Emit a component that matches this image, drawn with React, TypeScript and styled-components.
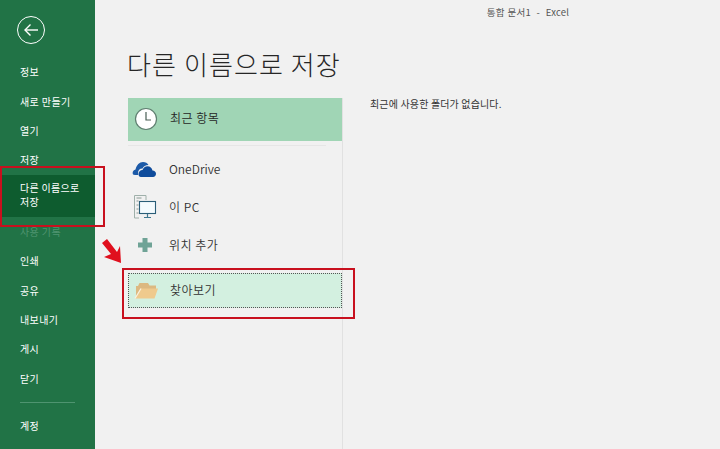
import styled, { createGlobalStyle } from "styled-components";

const GlobalStyle = createGlobalStyle`
  html, body {
    margin: 0;
    padding: 0;
    background: #f1f1f1;
    overflow: hidden;
  }
  * {
    box-sizing: border-box;
  }
`;

const Page = styled.div`
  position: relative;
  width: 720px;
  height: 449px;
  display: flex;
  overflow: hidden;
  background: #f1f1f1;
  font-family: "Noto Sans CJK KR", "Noto Sans", sans-serif;
  color: #333;
`;

const Sidebar = styled.nav`
  width: 95px;
  height: 449px;
  flex: none;
  background: #217346;
  display: flex;
  flex-direction: column;
  padding-top: 16px;
`;

const BackButton = styled.div`
  width: 28px;
  height: 28px;
  margin-left: 17px;
  margin-bottom: 13px;
  border: 1.5px solid #fff;
  border-radius: 50%;
  display: flex;
  align-items: center;
  justify-content: center;
`;

const NavItem = styled.div<{ $muted?: boolean }>`
  height: 29.4px;
  flex: none;
  padding-left: 20px;
  display: flex;
  align-items: center;
  font-size: 10px;
  font-weight: 400;
  letter-spacing: 0.4px;
  color: ${(props) => (props.$muted ? "#4f9470" : "#fff")};
`;

const ActiveItem = styled.div`
  height: 42px;
  flex: none;
  padding: 0 0 1px 20px;
  background: #0e5c2f;
  display: flex;
  flex-direction: column;
  justify-content: center;
  font-size: 10px;
  font-weight: 400;
  line-height: 14px;
  letter-spacing: 0.3px;
  color: #fff;
`;

const NavDivider = styled.div`
  height: 1px;
  flex: none;
  margin: 9px 20px 8px;
  background: #4f9470;
`;

const Main = styled.main`
  flex: 1;
  min-width: 0;
  display: flex;
  flex-direction: column;
`;

const TitleBar = styled.div`
  height: 24px;
  flex: none;
  display: flex;
  justify-content: center;
  align-items: center;
  padding-left: 241px;
  font-size: 9.5px;
  letter-spacing: 0.2px;
  word-spacing: 0.5px;
  color: #555;
  white-space: pre;
`;

const Heading = styled.h1`
  margin: 0;
  height: 74px;
  flex: none;
  padding: 22px 0 0 32px;
  font-size: 26px;
  font-weight: 300;
  line-height: 36px;
  letter-spacing: 1.1px;
  color: #262626;
`;

const Columns = styled.div`
  flex: 1;
  display: flex;
  padding-left: 33px;
`;

const Places = styled.div`
  width: 215px;
  flex: none;
  border-right: 1px solid #e1e1e1;
  display: flex;
  flex-direction: column;
`;

const RowLabel = styled.span<{ $latin?: boolean }>`
  position: relative;
  top: -1px;
  font-weight: 350;
  letter-spacing: ${(props) => (props.$latin ? "0" : "0.5px")};
`;

const RecentRow = styled.div`
  height: 43px;
  flex: none;
  display: flex;
  align-items: center;
  gap: 12px;
  padding: 0 0 2px 5px;
  background: #a0d5b5;
  font-size: 12px;
  color: #262626;
`;

const Separator = styled.div`
  height: 1px;
  flex: none;
  margin: 4px 16px 4px 0;
  background: #e6e6e6;
`;

const PlaceRow = styled.div`
  height: 38px;
  flex: none;
  display: flex;
  align-items: center;
  gap: 12px;
  padding-left: 4px;
  font-size: 12px;
  color: #333;
`;

const IconSlot = styled.span`
  width: 25px;
  height: 25px;
  flex: none;
  display: flex;
  align-items: center;
  justify-content: center;
`;

const BrowseRow = styled.div`
  height: 35px;
  flex: none;
  margin-top: 9px;
  display: flex;
  align-items: center;
  gap: 12px;
  padding-left: 4px;
  background: #d3f0e0;
  border: 1px dotted #555;
  font-size: 12px;
  color: #333;
`;

const Detail = styled.div`
  flex: 1;
  padding: 0 0 0 27px;
  font-size: 10px;
  line-height: 11px;
  letter-spacing: 0.15px;
  color: #333;
`;

const RedBox = styled.div<{ $left: number; $top: number; $width: number; $height: number }>`
  position: absolute;
  left: ${(props) => props.$left}px;
  top: ${(props) => props.$top}px;
  width: ${(props) => props.$width}px;
  height: ${(props) => props.$height}px;
  border: 2px solid #c8101e;
`;

const Arrow = styled.svg`
  position: absolute;
  left: 102px;
  top: 238px;
`;

function App() {
  return (
    <Page>
      <GlobalStyle />
      <Sidebar>
        <BackButton>
          <svg width="16" height="14" viewBox="0 0 16 14" fill="none" stroke="#fff" strokeWidth="1.4">
            <path d="M15 7H2" />
            <path d="M7.5 1.5 2 7l5.5 5.5" />
          </svg>
        </BackButton>
        <NavItem>정보</NavItem>
        <NavItem>새로 만들기</NavItem>
        <NavItem>열기</NavItem>
        <NavItem>저장</NavItem>
        <ActiveItem>
          <span>다른 이름으로</span>
          <span>저장</span>
        </ActiveItem>
        <NavItem $muted>사용 기록</NavItem>
        <NavItem>인쇄</NavItem>
        <NavItem>공유</NavItem>
        <NavItem>내보내기</NavItem>
        <NavItem>게시</NavItem>
        <NavItem>닫기</NavItem>
        <NavDivider />
        <NavItem>계정</NavItem>
      </Sidebar>
      <Main>
        <TitleBar>{"통합 문서1  -  Excel"}</TitleBar>
        <Heading>다른 이름으로 저장</Heading>
        <Columns>
          <Places>
            <RecentRow>
              <IconSlot>
                <svg width="24" height="24" viewBox="0 0 24 24">
                  <circle cx="12" cy="12" r="10.5" fill="#fff" stroke="#5f7f70" strokeWidth="1.2" />
                  <path d="M12 5v8h5" fill="none" stroke="#4a5f55" strokeWidth="1.2" />
                </svg>
              </IconSlot>
              <RowLabel>최근 항목</RowLabel>
            </RecentRow>
            <Separator />
            <PlaceRow>
              <IconSlot>
                <svg width="25" height="16" viewBox="0 0 25 16">
                  <path d="M1 13.5c-1-2 0-4.500 2.500-5C4.500 4 7.500 1 11 1c2.500 0 4.500 1.200 5.500 3-3 0-5 1.500-6 3.500-3 0-4.500 2-4.500 4.500 0 .8.100 1.500.3 2H3c-.9 0-1.600-.200-2-.500Z" fill="#1c5aa8" />
                  <path d="M9 16c-2 0-2.500-1.700-2.500-3 0-2.300 1.700-4 4-4 .8-2.300 2.800-3.800 5-3.800 2.600 0 4.500 1.800 5 4.300 2 0 3.500 1.300 3.500 3.200 0 1.800-1.200 3.300-3 3.300Z" fill="#0f4c9c" />
                </svg>
              </IconSlot>
              <RowLabel $latin>OneDrive</RowLabel>
            </PlaceRow>
            <PlaceRow>
              <IconSlot>
                <svg width="24" height="24" viewBox="0 0 24 24" fill="none">
                  <path d="M13 5V.5H1.500V23H6" stroke="#9fb0aa" strokeWidth="1" />
                  <path d="M3.500 3h5M3.500 6h2M3.500 10h2M3.500 14h2M3.500 18h2" stroke="#8a9a94" strokeWidth="1" />
                  <rect x="6.500" y="6.500" width="16" height="12" fill="#f4fbfe" stroke="#2a5e78" strokeWidth="1.100" />
                  <path d="M14.500 19v3M11 22.500h7" stroke="#3f7890" strokeWidth="1.200" />
                </svg>
              </IconSlot>
              <RowLabel>이 PC</RowLabel>
            </PlaceRow>
            <PlaceRow>
              <IconSlot>
                <svg width="16" height="16" viewBox="0 0 16 16">
                  <path d="M5.500 1h5v4.500H15v5h-4.500V15h-5v-4.500H1v-5h4.500Z" fill="#6fa396" />
                </svg>
              </IconSlot>
              <RowLabel>위치 추가</RowLabel>
            </PlaceRow>
            <BrowseRow>
              <IconSlot>
                <svg width="24" height="17" viewBox="0 0 24 17">
                  <path d="M2 16V4h2l1.500-3H14l1.500 2.500H22V7H8L2 16Z" fill="#dcb981" />
                  <path d="M1 16.500 7 6.500H24L20.500 16.500Z" fill="#efca8d" />
                  <path d="M1 16.500 7 6.500" fill="none" stroke="#fbf3e2" strokeWidth="1.200" />
                </svg>
              </IconSlot>
              <RowLabel>찾아보기</RowLabel>
            </BrowseRow>
          </Places>
          <Detail>최근에 사용한 폴더가 없습니다.</Detail>
        </Columns>
      </Main>
      <RedBox $left={0} $top={166} $width={105} $height={61} />
      <RedBox $left={122} $top={268} $width={233} $height={51} />
      <Arrow width="24" height="32" viewBox="0 0 24 32">
        <path d="M0 5 5 1l10 13 3-6 1 17-17-6 7-3Z" fill="#e0101e" />
      </Arrow>
    </Page>
  );
}

export default App;
